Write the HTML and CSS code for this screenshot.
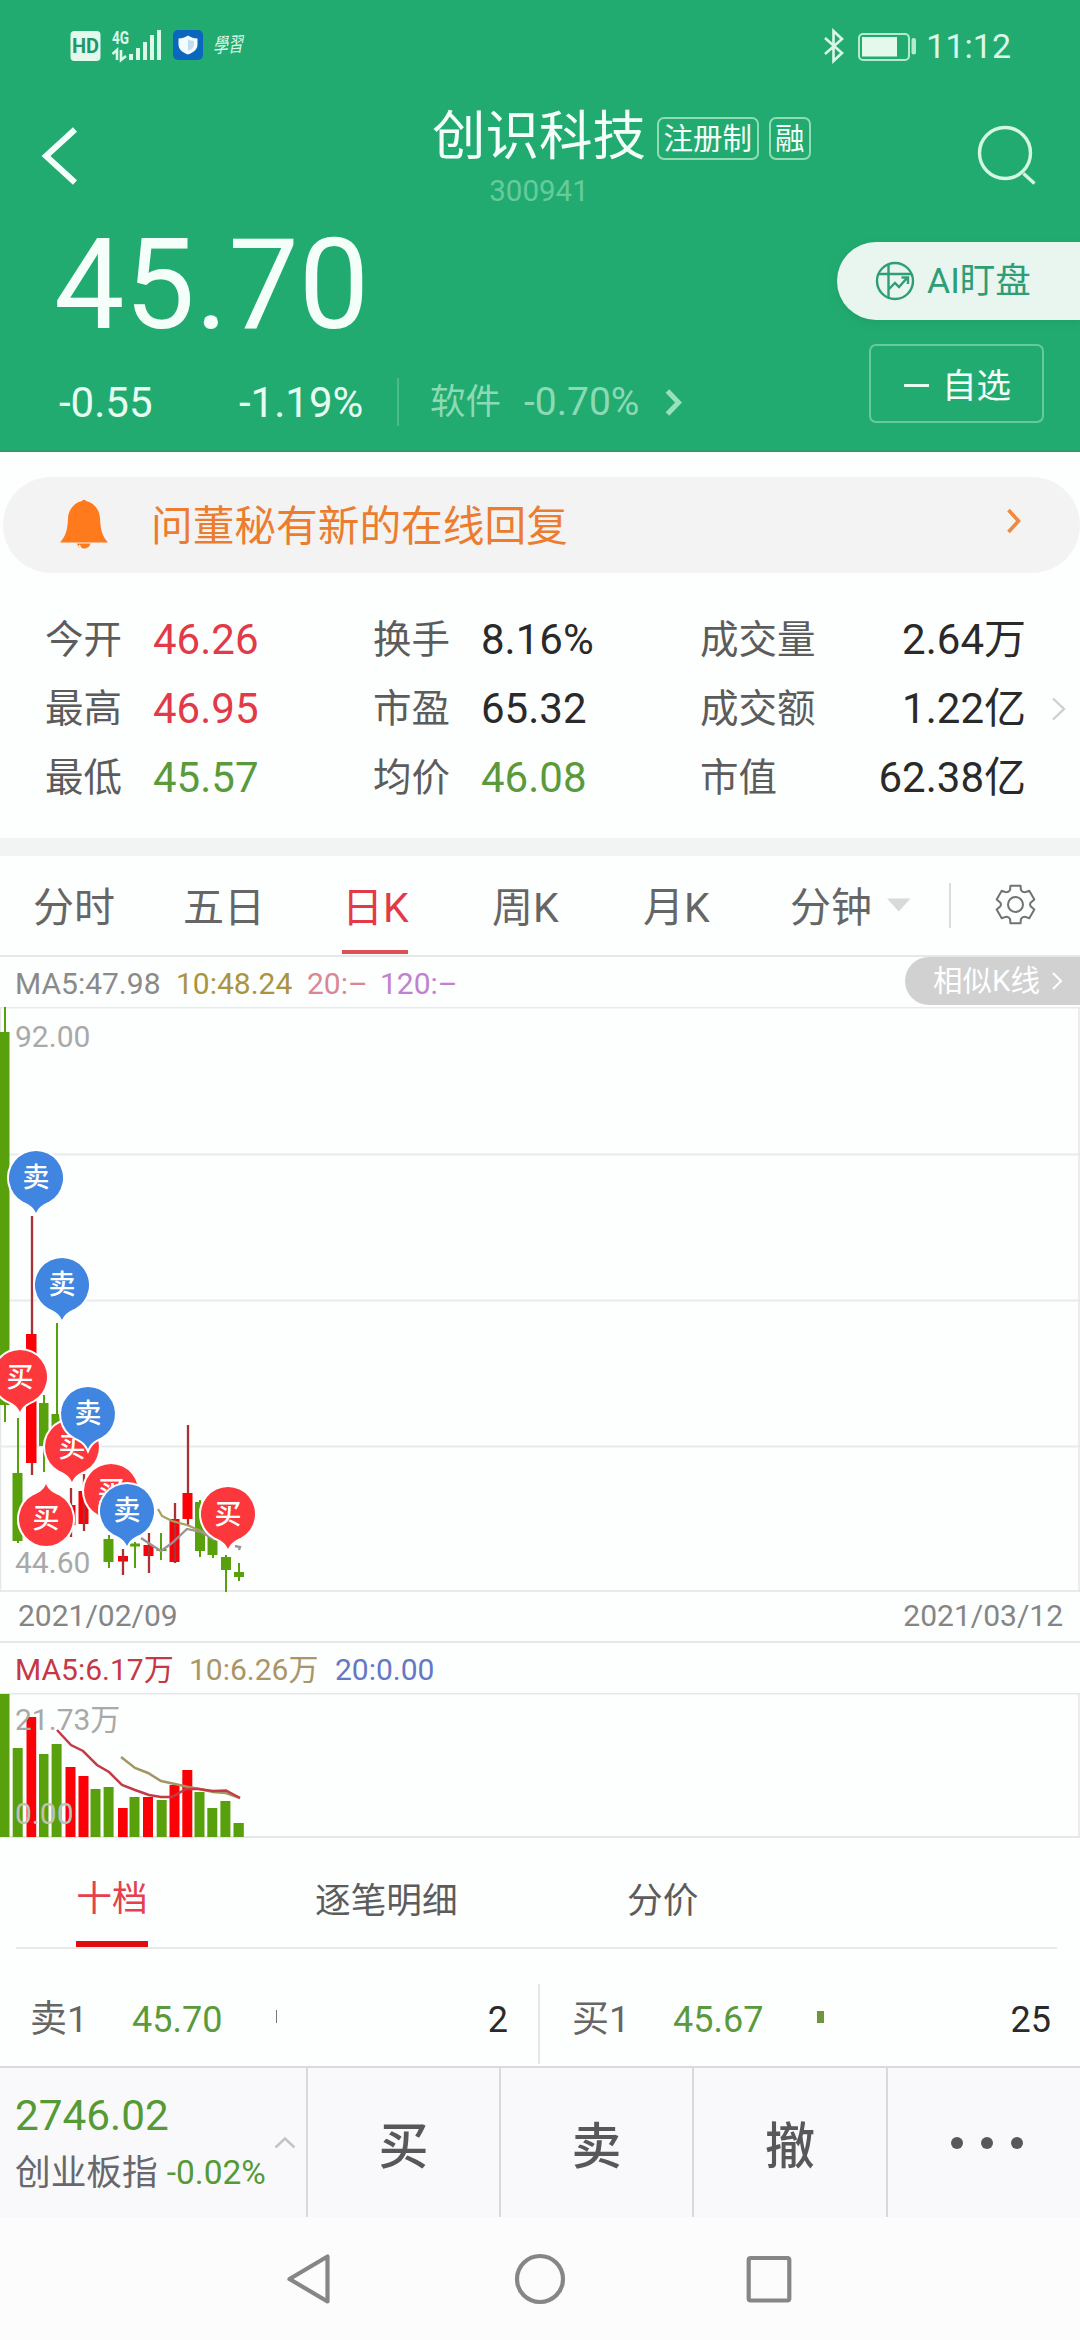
FILE: index.html
```html
<!DOCTYPE html>
<html lang="zh-CN">
<head>
<meta charset="utf-8">
<title>创识科技 300941</title>
<link rel="stylesheet" href="styles.css">
</head>
<body>
<div class="screen">
<header class="header">
  <div class="status">
    <svg class="status-left" width="190" height="40" viewBox="66 26 190 40">
      <rect x="70.500" y="31" width="30" height="30" rx="4" fill="#e3f9ec"/>
      <text x="85.500" y="53" class="hd">HD</text>
      <text x="112" y="44" class="net" textLength="17" lengthAdjust="spacingAndGlyphs">4G</text>
      <path d="M112.500 54l4.500-4v10M121 50v10l5-4" fill="none" stroke="#dcf8e8" stroke-width="2.600"/>
      <path d="M131 54v6M138 48v12M145 42v18M152 35v25M159 30v30" stroke="#dcf8e8" stroke-width="4" fill="none"/>
      <rect x="173" y="30" width="30" height="30" rx="5" fill="#0b66bd"/>
      <path d="M188 35.500c3 2 6 3 9.500 3v6c0 5-4 8-9.500 10-5.500-2-9.500-5-9.500-10v-6c3.500 0 6.500-1 9.500-3z" fill="#f2fbff"/>
      <path d="M188 39v12c4-1.500 6-3.500 6-7v-3c-2.500 0-4-1-6-2z" fill="#c5dcf0"/>
      <text transform="translate(213 53) rotate(-4) skewX(-14)" class="xuexi" textLength="30" lengthAdjust="spacingAndGlyphs">學習</text>
    </svg>
    <div class="status-right">
      <svg width="96" height="36" viewBox="822 27 96 36">
        <path d="M825 37l17 15-8.500 8v-30l8.500 8-17 15" fill="none" stroke="#dcf8e8" stroke-width="2.600"/>
        <rect x="859" y="33" width="50" height="26" rx="4" fill="none" stroke="#b5eacd" stroke-width="2"/>
        <rect x="862" y="36" width="35" height="19.500" fill="#e3f9ec"/>
        <rect x="911.500" y="37" width="4.500" height="16.500" rx="2" fill="#b5eacd"/>
      </svg>
      <span class="time">11:12</span>
    </div>
  </div>
  <div class="nav">
    <svg class="back" width="40" height="62" viewBox="40 125 40 62"><path d="M75 129.500L46 156l29 26.500" fill="none" stroke="#f4fff9" stroke-width="6"/></svg>
    <div class="title-block">
      <div class="title-line"><h1>创识科技</h1><span class="tag">注册制</span><span class="tag">融</span></div>
      <div class="code">300941</div>
    </div>
    <svg class="search" width="62" height="62" viewBox="976 124 62 62"><circle cx="1005" cy="153" r="25.500" fill="none" stroke="#d4f7e4" stroke-width="3.400"/><path d="M1023.500 173.500l11 10" stroke="#d4f7e4" stroke-width="3.400"/></svg>
  </div>
  <div class="quote">
    <div class="quote-main">
      <div class="price">45.70</div>
      <div class="change">
        <span class="diff">-0.55</span><span class="pct">-1.19%</span>
        <span class="sector"><span>软件</span><span class="sector-pct">-0.70%</span>
        <svg width="20" height="30" viewBox="664 385 20 30"><path d="M667.500 389l11 11.500-11 11.500" fill="none" stroke="#9be0bd" stroke-width="5"/></svg></span>
      </div>
    </div>
    <div class="actions">
      <div class="ai">
        <svg width="40" height="40" viewBox="0 0 40 40" fill="none" stroke="#2f9d76" stroke-width="2.400"><circle cx="20" cy="20" r="18"/><path d="M4 13h32M13.500 3v33M14 28l6-6 4 4 8-9M26.500 16.500H33V23"/></svg>
        <span>AI盯盘</span>
      </div>
      <div class="fav"><i></i><span>自选</span></div>
    </div>
  </div>
</header>

<div class="notice">
  <svg width="50" height="54" viewBox="59 497 50 54"><path d="M82 500a2.200 2.200 0 0 1 4 0c8.500 2 13.500 9 14 17 .6 12 2 18 8 24.500H60c6-6.500 7.500-12.500 8-24.500 .5-8 5.500-15 14-17z" fill="#ff7a1c"/><path d="M77 542.500a7 7 0 0 0 13.500 0z" fill="#ff7a1c"/><path d="M79.500 544c.5 3 2.500 4.500 5 4.500" stroke="#fff" stroke-width="1.500" fill="none"/></svg>
  <span>问董秘有新的在线回复</span>
  <svg class="notice-go" width="18" height="28" viewBox="1004 507 18 28"><path d="M1007.500 510l10 11-10 11" fill="none" stroke="#f08a3c" stroke-width="3.600"/></svg>
</div>

<section class="stats">
  <span>今开</span><b class="up">46.26</b><span>换手</span><b>8.16%</b><span>成交量</span><b class="r">2.64万</b><i></i>
  <span>最高</span><b class="up">46.95</b><span>市盈</span><b>65.32</b><span>成交额</span><b class="r">1.22亿</b><svg width="16" height="26" viewBox="1051 695 16 26"><path d="M1053 697.500l11 10.500-11 10.500" fill="none" stroke="#cfcfcf" stroke-width="2.400"/></svg>
  <span>最低</span><b class="down">45.57</b><span>均价</span><b class="down">46.08</b><span>市值</span><b class="r">62.38亿</b><i></i>
</section>

<nav class="periods">
  <span>分时</span><span>五日</span><span class="active"><em>日K</em></span><span>周K</span><span>月K</span><span>分钟</span>
  <svg class="period-tools" width="160" height="56" viewBox="880 877 160 56"><path d="M887 898.500h23.500l-11.700 13z" fill="#d9d9d9"/><path d="M950 883v45" stroke="#dcdcdc" stroke-width="2"/><g transform="translate(1015.500 904.500)" fill="none" stroke="#727272" stroke-width="2" stroke-linejoin="round"><circle r="7.500"/><path d="M-5.050-18.840H5.050L5.430-14.400Q7-11.800 9.930-12.400L13.800-13.800 18.840-5.050 15.360-2.020Q13.800 0 15.360 2.020L18.840 5.050 13.800 13.800 9.930 12.400Q7 11.800 5.430 14.400L5.050 18.840H-5.050L-5.430 14.400Q-7 11.800-9.930 12.400L-13.800 13.800-18.840 5.050-15.360 2.020Q-13.800 0-15.360-2.020L-18.840-5.050-13.800-13.800-9.930-12.400Q-7-11.800-5.430-14.400Z"/></g></svg>
</nav>

<div class="ma-row">
  <span class="ma5">MA5:47.98</span><span class="ma10">10:48.24</span><span class="ma20">20:–</span><span class="ma120">120:–</span>
  <div class="similar"><span>相似K线</span><svg width="12" height="22" viewBox="0 0 12 22"><path d="M1 3l8 8-8 8" fill="none" stroke="#fff" stroke-width="2"/></svg></div>
</div>

<svg class="kline" width="1080" height="585" viewBox="0 1007 1080 585">
  <path d="M0 1007.500H1080M0 1154.500H1080M0 1300.500H1080M0 1446.500H1080M0 1591H1080" stroke="#e9eaec" stroke-width="2"/>
  <path d="M.5 1007V1592M1079 1007V1592" stroke="#e6e6e8" stroke-width="1.500"/>
  <g fill="#58a00c">
    <path d="M0 1032h9.500v373H0zM4 1007h2v415H4z"/>
    <path d="M12.500 1473h10v68h-10zM17 1418h2v125h-2z"/>
    <path d="M39 1403h9.500v43H39zM43 1395h2v77h-2z"/>
    <path d="M51.500 1414h10v26h-10zM56 1323h2v120h-2z"/>
    <path d="M103.500 1539h10v23h-10zM108 1535h2v33h-2z"/>
    <path d="M130 1543.500h10v3h-10zM134 1542h2v26h-2z"/>
    <path d="M156.500 1549h10v2h-10zM160 1533h2v27h-2z"/>
    <path d="M195 1502h10v49h-10zM199 1500h2v57h-2z"/>
    <path d="M207.500 1535h10v20h-10zM212 1530h2v28h-2z"/>
    <path d="M221 1557h10v13h-10zM225 1555h2v37h-2z"/>
    <path d="M234 1572h10v5h-10zM238 1563h2v18h-2z"/>
  </g>
  <g fill="#fb0007">
    <path d="M26 1334h10.500v129H26zM31 1460h2v15h-2zM65.500 1505h10v20h-10zM78.500 1491h10v33h-10zM118 1556h10v5.500h-10zM143.500 1545h10v11h-10zM169.500 1519h10v43h-10zM182.500 1493h10v26h-10z"/>
  </g>
  <path d="M32 1216v118M32 1463v12M71 1488v49M84 1474v57M123 1549v26M149 1533v40M175 1503v60M188 1425v68M188 1519v6" stroke="#a93236" stroke-width="2.300"/>
  <path d="M158 1509l4 7 10 5 15 4 14 6 14 6" fill="none" stroke="#a9a157" stroke-width="2.300"/>
  <path d="M141 1538l9 6 11 7 11-8 15-14 14 3 14 8M235 1546l5 1-1 3" fill="none" stroke="#9b9393" stroke-width="2.300"/>
  <text x="15" y="1047" class="axis">92.00</text>
  <text x="15" y="1573" class="axis">44.60</text>
  <defs>
    <path id="pin" d="M0 35C-3 28-8 26-13 23.700A27 27 0 1 1 13 23.700C8 26 3 28 0 35Z"/>
  </defs>
  <g class="buy"><use href="#pin" x="20" y="1377"/><text x="20" y="1387">买</text></g>
  <g class="buy"><use href="#pin" x="72" y="1447"/><text x="72" y="1457">买</text></g>
  <g class="buy"><use href="#pin" transform="translate(46 1519) scale(1 -1)"/><text x="46" y="1528">买</text></g>
  <g class="buy"><use href="#pin" x="111" y="1491"/><text x="111" y="1501">买</text></g>
  <g class="sell"><use href="#pin" x="36" y="1178"/><text x="36" y="1187">卖</text></g>
  <g class="sell"><use href="#pin" x="62" y="1285"/><text x="62" y="1294">卖</text></g>
  <g class="sell"><use href="#pin" x="88" y="1414"/><text x="88" y="1423">卖</text></g>
  <g class="sell"><use href="#pin" x="127" y="1511"/><text x="127" y="1520">卖</text></g>
  <g class="buy"><use href="#pin" x="228" y="1514"/><text x="228" y="1524">买</text></g>
</svg>

<div class="dates"><span>2021/02/09</span><span>2021/03/12</span></div>
<div class="vol-ma"><span class="v5">MA5:6.17万</span><span class="v10">10:6.26万</span><span class="v20">20:0.00</span></div>

<svg class="volume" width="1080" height="145" viewBox="0 1693 1080 145">
  <path d="M0 1693.500H1080M0 1837H1080" stroke="#e6e7e9" stroke-width="2"/>
  <path d="M.5 1693V1837M1079 1693V1837" stroke="#e6e6e8" stroke-width="1.500"/>
  <path fill="#58a00c" d="M0 1694h9.500v143H0zM12.700 1748h10v89h-10zM39 1754h9.500v83H39zM51.600 1744h10v93h-10zM90.500 1789h10v48h-10zM103.600 1787h10v50h-10zM129.500 1797h10v40h-10zM156.700 1800h10v37h-10zM194.500 1792h10v45h-10zM207.300 1808h10v29h-10zM220.400 1801h10v36h-10zM233.500 1823h10.300v14h-10.300z"/>
  <path fill="#fb0007" d="M26.500 1717h9.700v120h-9.700zM65.500 1767h10v70h-10zM78.500 1776h10v61h-10zM118 1808h9.700v29H118zM143 1797h10v40h-10zM169.500 1785h10v52h-10zM182.300 1770h10v67h-10z"/>
  <path d="M121 1757l14 11 13 5 13 8 14 3 13 3 12 2 13 3 13 1 14 5" fill="none" stroke="#a39662" stroke-width="2.500"/>
  <path d="M57 1730l14 15 12 6 14 14 12 7 13 13 13 5 14 5 12 2h11l14-8h12l15 2 13-.5 14 7.500" fill="none" stroke="#c43b46" stroke-width="2.500"/>
  <text x="15" y="1730" class="axis">21.73万</text>
  <text x="15" y="1824" class="axis light">0.00</text>
</svg>

<nav class="depth-tabs"><span class="active">十档</span><span>逐笔明细</span><span>分价</span></nav>

<div class="depth">
  <div class="level"><span>卖1</span><b>45.70</b><i class="tick"></i><em>2</em></div>
  <div class="level bid"><span>买1</span><b>45.67</b><i class="block"></i><em>25</em></div>
</div>

<footer class="trade">
  <div class="index">
    <div class="index-value">2746.02</div>
    <div class="index-line"><span>创业板指</span><b>-0.02%</b></div>
    <svg class="caret" width="22" height="14" viewBox="0 0 22 14"><path d="M1.500 11.500L11 2.500l9.500 9" fill="none" stroke="#c4c4c8" stroke-width="2.500"/></svg>
  </div>
  <div class="btn">买</div><div class="btn">卖</div><div class="btn">撤</div>
  <div class="more"><i></i><i></i><i></i></div>
</footer>

<div class="sysnav">
  <svg width="1080" height="60" viewBox="0 2249 1080 60" fill="none" stroke="#868686" stroke-width="4.200" stroke-linejoin="round"><path d="M289.500 2279l38-22.500v45z"/><circle cx="540" cy="2279" r="23"/><rect x="748.700" y="2258" width="40.600" height="42.500" rx="2"/></svg>
</div>
</div>
</body>
</html>
```
FILE: styles.css
```css
* { box-sizing: border-box; margin: 0; padding: 0; }
body { width: 1080px; background: #fdfefe; font-family: Roboto, "Noto Sans CJK SC", sans-serif; color: #2a2a2a; }
b, em, i, h1 { font-weight: 400; font-style: normal; }
svg { display: block; flex: none; }
.screen { width: 1080px; height: 2340px; overflow: hidden; white-space: nowrap; }

/* header */
.header { height: 452px; background: #22ab71; color: #f4fff9; border-bottom: 2px solid #2f9d6b; }
.status { height: 91px; display: flex; justify-content: space-between; align-items: center; padding: 0 69px 0 66px; }
.hd { font: 700 20px Roboto, sans-serif; fill: #22966a; text-anchor: middle; }
.net { font: 700 19px Roboto, sans-serif; fill: #dcf8e8; }
.xuexi { font: 20px "Noto Sans CJK TC", sans-serif; fill: #dcf8e8; }
.status-right { display: flex; align-items: center; gap: 8px; color: #dcf8e8; }
.time { font-size: 34px; line-height: 40px; padding-top: 1px; }
.nav { height: 121px; display: grid; grid-template-columns: 392px 544px 62px; padding: 0 42px 0 40px; }
.back, .search { margin-top: 34px; }
.search { margin-top: 33px; }
.title-block { padding-top: 16px; }
.title-line { display: flex; align-items: center; height: 60px; }
h1 { font-size: 53.500px; line-height: 60px; }
.tag { height: 43px; border: 2px solid #8fdcb5; border-radius: 7px; font-size: 29.500px; line-height: 40px; padding: 0 4.500px; margin: 2px 0 0 10px; }
h1 + .tag { margin-left: 11px; }
.code { width: 214px; margin-top: 6px; font-size: 29.500px; line-height: 36px; text-align: center; color: #66cb9c; }
.quote { display: flex; justify-content: space-between; height: 238px; }
.quote-main { padding-left: 54px; }
.price { font-size: 125.500px; line-height: 148px; }
.change { display: flex; align-items: center; height: 48px; margin-top: 18px; font-size: 42px; line-height: 50px; color: #e6fdf1; }
.diff { width: 181px; padding-left: 5px; }
.diff, .pct { padding-top: 1px; }
.pct { width: 162px; padding-left: 4px; }
.sector { display: flex; align-items: center; height: 48px; padding-left: 31px; border-left: 2px solid #4bbb8b; color: #8bdab3; font-size: 35.500px; }
.sector-pct { margin: 0 25px 0 23px; font-size: 39px; }
.actions { width: 243px; padding-top: 30px; }
.ai { height: 78px; display: flex; align-items: center; gap: 12px; padding-left: 38px; border-radius: 39px 0 0 39px; background: #e9f6ef; color: #2f9d76; font-size: 35.500px; line-height: 40px; box-shadow: 0 3px 8px #1d986488; }
.fav { width: 175px; height: 79px; margin: 24px 0 0 32px; display: flex; align-items: center; gap: 13px; padding: 4px 0 0 33px; border: 2px solid #65cb9c; border-radius: 7px; font-size: 34.500px; line-height: 40px; }
.fav i { width: 25px; height: 3px; background: #e6fdf1; }

/* notice */
.notice { height: 96px; margin: 25px 0 0 3px; display: flex; align-items: center; padding: 0 57px 0 56px; border-radius: 48px; background: #f3f3f4; color: #ec7d2e; font-size: 41.700px; line-height: 50px; }
.notice span { margin: 4px auto 0 42px; }
.notice-go { margin-top: -8px; }

/* key figures */
.stats { height: 265px; padding-top: 32px; display: grid; grid-template-columns: 108px 220px 108px 219px 164px 162px 1fr; grid-template-rows: repeat(3, 69px); align-items: center; padding-left: 45px; font-size: 38.500px; line-height: 50px; color: #5c5c5c; }
.stats b { font-size: 42px; color: #2a2a2a; }
.stats .up { color: #e23a48; }
.stats .down { color: #5a9a3c; }
.stats .r { text-align: right; }
.stats svg { margin-left: 25px; }

/* period tabs */
.periods { height: 119px; border-top: 18px solid #f2f4f3; border-bottom: 2px solid #e6e7e9; display: grid; grid-template-columns: 150px 157px 152px 151px 147px 90px 160px; padding-left: 33px; font-size: 41px; line-height: 104px; color: #666; }
.periods .active { color: #e23a48; }
.periods em { display: block; width: 66px; height: 98px; border-bottom: 4px solid #de5156; margin-left: 2px; text-align: center; }
.period-tools { margin-top: 21px; }

/* moving averages */
.ma-row { height: 50px; display: flex; font-size: 30px; line-height: 54px; padding-left: 15px; color: #8a8a8a; }
.ma5 { width: 161px; }
.ma10 { width: 131px; color: #aa9440; }
.ma20 { width: 73px; color: #d98796; }
.ma120 { color: #c082cf; }
.similar { width: 175px; height: 48px; margin-left: auto; display: flex; gap: 12px; align-items: center; padding-left: 28px; border-radius: 24px 0 0 24px; background: #d1d1d1; color: #fff; font-size: 29.500px; }
.axis { font: 30px Roboto, "Noto Sans CJK SC", sans-serif; fill: #a9a9a9; }
.light { fill: #bdc2b8; }
.buy { fill: #fc383d; }
.sell { fill: #4085e0; }
.buy use, .sell use { stroke: #fff; stroke-width: 4px; paint-order: stroke; }
.buy text, .sell text { font: 500 27px "Noto Sans CJK SC", sans-serif; fill: #fff; text-anchor: middle; }

.dates { height: 51px; display: flex; justify-content: space-between; padding: 0 17px 0 18px; border-bottom: 2px solid #e6e7e9; font-size: 30px; line-height: 48px; color: #858585; }
.vol-ma { height: 50px; display: flex; padding-left: 15px; font-size: 30px; line-height: 54px; }
.v5 { width: 174px; color: #c53845; }
.v10 { width: 146px; color: #aa9564; }
.v20 { color: #6478c4; }

/* order book */
.depth-tabs { height: 111px; margin: 0 23px 0 16px; display: grid; grid-template-columns: 299px 312px 1fr; border-bottom: 2px solid #e9e9eb; font-size: 35.700px; line-height: 127px; color: #5c5c5c; }
.depth-tabs .active { width: 72px; height: 109px; margin-left: 60px; text-align: center; line-height: 123px; color: #e5404d; border-bottom: 6px solid #dd0d10; }
.depth { height: 118px; display: flex; padding-top: 35px; }
.level { width: 540px; height: 80px; padding: 16px 30px 0 30px; display: grid; grid-template-columns: 102px 144px 1fr auto; font-size: 36px; line-height: 40px; border-right: 2px solid #e6e8e8; }
.level.bid { border: 0; padding-left: 32px; padding-right: 29px; grid-template-columns: 100px 144px 1fr auto; }
.level span { color: #666; font-size: 37px; }
.level b { color: #5a9a3c; }
.level.bid b { padding-left: 1px; }
.tick { width: 1px; height: 13px; margin-top: 10px; background: #77777f; }
.block { width: 7px; height: 12px; margin: 11px 0 0 1px; background: #6f963b; }

/* trading bar */
.trade { height: 151px; display: grid; grid-template-columns: 308px 193px 193px 194px 1fr; border-top: 2px solid #dadadc; background: #f9f9fb; margin-top: -1px; }
.trade > div { border-right: 2px solid #d9d9db; }
.trade > .more { border: 0; }
.index { position: relative; padding: 21px 0 0 15px; }
.index-value { font-size: 42.300px; line-height: 54px; color: #559a35; }
.index-line { display: flex; gap: 9px; font-size: 35.700px; line-height: 60px; color: #68686c; }
.index-line b { font-size: 33.500px; color: #559a35; }
.caret { position: absolute; right: 10px; top: 68px; }
.btn { font: 500 50px/148px "Noto Sans CJK SC", sans-serif; text-align: center; color: #58585a; }
.more { display: flex; justify-content: center; gap: 18px; padding: 69px 0 0 5px; }
.more i { width: 12px; height: 12px; border-radius: 50%; background: #58585a; }
.sysnav { height: 124px; padding-top: 32px; background: #fcfcfc; }
```
